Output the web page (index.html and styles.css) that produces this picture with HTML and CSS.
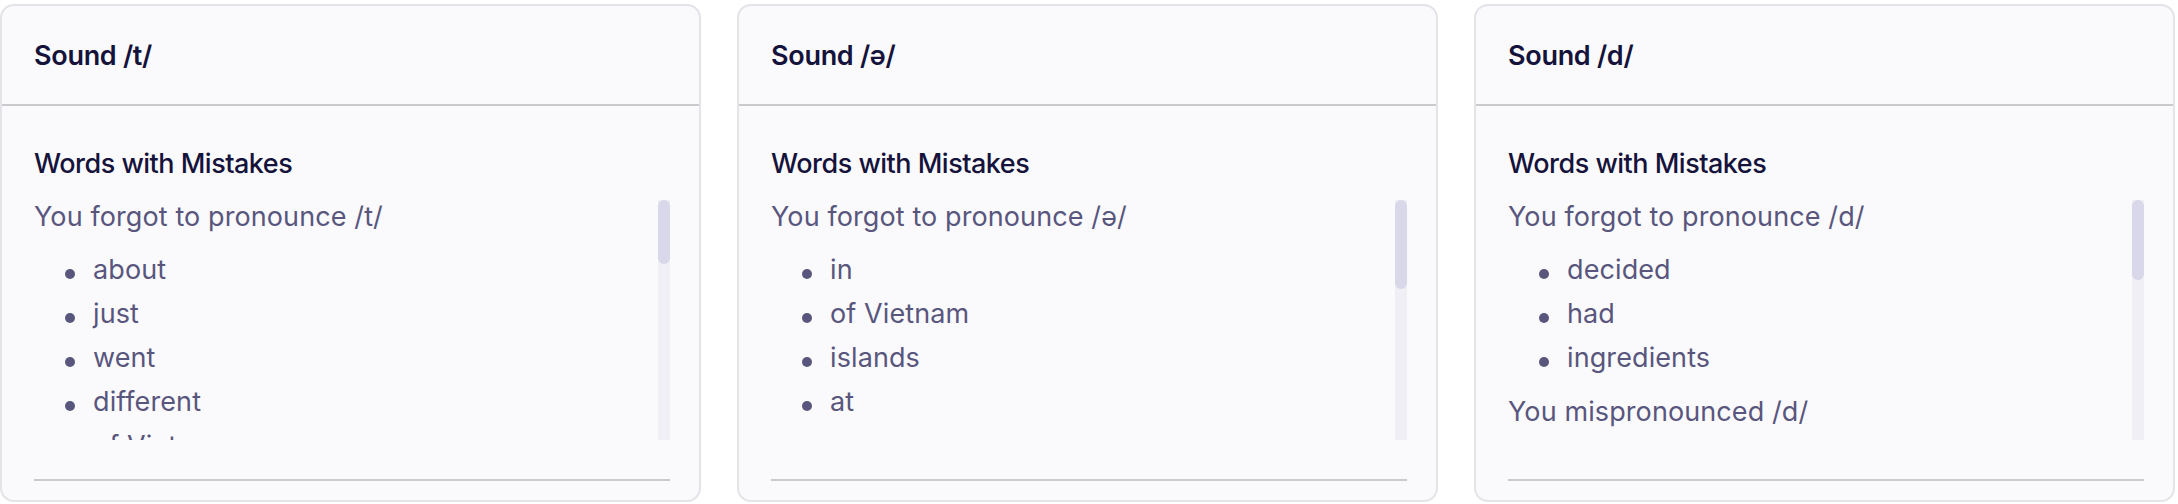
FILE: index.html
```html
<!DOCTYPE html>
<html lang="en">
<head>
    <meta charset="UTF-8">
    <meta name="viewport" content="width=device-width, initial-scale=1.0">
    <title>Pronunciation Feedback</title>
    <link rel="stylesheet" href="styles.css">
</head>

<body>
    <div class="cards">
        <section class="card">
            <div class="card-header">
                <h2>Sound /t/</h2>
            </div>
            <div class="card-body">
                <h3>Words with Mistakes</h3>
                <div class="mistakes-box">
                    <div class="mistakes">
                        <p>You forgot to pronounce /t/</p>
                        <ul>
                            <li>about</li>
                            <li>just</li>
                            <li>went</li>
                            <li>different</li>
                            <li>of Vietnam</li>
                            <li>at</li>
                            <li>it</li>
                            <li>that</li>
                            <li>night</li>
                            <li>what</li>
                            <li>but</li>
                            <li>street</li>
                        </ul>
                        <p>You mispronounced /t/</p>
                        <ul>
                            <li>tasted</li>
                            <li>visited</li>
                            <li>fruit</li>
                            <li>started</li>
                            <li>water</li>
                            <li>little</li>
                        </ul>
                    </div>
                    <div class="scrollbar"><div class="thumb" style="height: 64px"></div></div>
                </div>
                <div class="card-footer"></div>
            </div>
        </section>

        <section class="card">
            <div class="card-header">
                <h2>Sound /ə/</h2>
            </div>
            <div class="card-body">
                <h3>Words with Mistakes</h3>
                <div class="mistakes-box">
                    <div class="mistakes">
                        <p>You forgot to pronounce /ə/</p>
                        <ul>
                            <li>in</li>
                            <li>of Vietnam</li>
                            <li>islands</li>
                            <li>at</li>
                        </ul>
                        <p>You mispronounced /ə/</p>
                        <ul>
                            <li>about</li>
                            <li>ingredients</li>
                            <li>decided</li>
                            <li>different</li>
                            <li>traditional</li>
                            <li>banana</li>
                        </ul>
                    </div>
                    <div class="scrollbar"><div class="thumb" style="height: 89px"></div></div>
                </div>
                <div class="card-footer"></div>
            </div>
        </section>

        <section class="card">
            <div class="card-header">
                <h2>Sound /d/</h2>
            </div>
            <div class="card-body">
                <h3>Words with Mistakes</h3>
                <div class="mistakes-box">
                    <div class="mistakes">
                        <p>You forgot to pronounce /d/</p>
                        <ul>
                            <li>decided</li>
                            <li>had</li>
                            <li>ingredients</li>
                        </ul>
                        <p>You mispronounced /d/</p>
                        <ul>
                            <li>did</li>
                            <li>food</li>
                            <li>and</li>
                            <li>made</li>
                            <li>tried</li>
                            <li>would</li>
                            <li>could</li>
                            <li>wanted</li>
                            <li>played</li>
                            <li>used</li>
                            <li>good</li>
                        </ul>
                    </div>
                    <div class="scrollbar"><div class="thumb" style="height: 80px"></div></div>
                </div>
                <div class="card-footer"></div>
            </div>
        </section>
    </div>
</body>
</html>
```

FILE: styles.css
```css
* {
    box-sizing: border-box;
}

body {
    margin: 0;
    background-color: #ffffff;
    font-family: Inter, "Noto Sans", sans-serif;
}

.cards {
    display: grid;
    grid-template-columns: repeat(3, 1fr);
    gap: 36px;
    width: 2175px;
    padding-top: 4px;
}

.card {
    height: 498px;
    display: flex;
    flex-direction: column;
    background-color: #fafafc;
    border: 2px solid #e3e3e8;
    border-radius: 14px;
    overflow: hidden;
}

.card-header {
    padding: 32px 32px 30px;
    border-bottom: 2px solid #c9c9ce;
}

.card-header h2 {
    margin: 0;
    font-size: 27px;
    line-height: 36px;
    font-weight: 600;
    letter-spacing: -0.3px;
    color: #15133b;
}

.card-body {
    flex: 1;
    display: flex;
    flex-direction: column;
    padding: 40px 29px 19px 32px;
}

.card-body h3 {
    margin: 0 0 18px;
    font-size: 27px;
    line-height: 36px;
    font-weight: 500;
    letter-spacing: -0.5px;
    color: #15133b;
}

.mistakes-box {
    display: flex;
    height: 240px;
}

.mistakes {
    flex: 1;
    overflow: hidden;
    color: #59567e;
    font-size: 27px;
    line-height: 34px;
    letter-spacing: 0.1px;
}

.scrollbar {
    width: 12px;
    flex: none;
    background-color: #f0eff5;
}

.thumb {
    background-color: #d9d7ea;
    border-radius: 6px;
}

.mistakes p {
    margin: 0 0 19px;
}

.mistakes ul {
    list-style: none;
    margin: 0 0 20px;
    padding: 0 0 0 59px;
}

.mistakes li + li {
    margin-top: 10px;
}

.mistakes li::before {
    content: "";
    display: inline-block;
    width: 10px;
    height: 10px;
    margin: 0 18px 0 -28px;
    border-radius: 50%;
    background-color: currentColor;
}

.card-footer {
    margin-top: 39px;
    border-top: 2px solid #c9c9ce;
}
```
